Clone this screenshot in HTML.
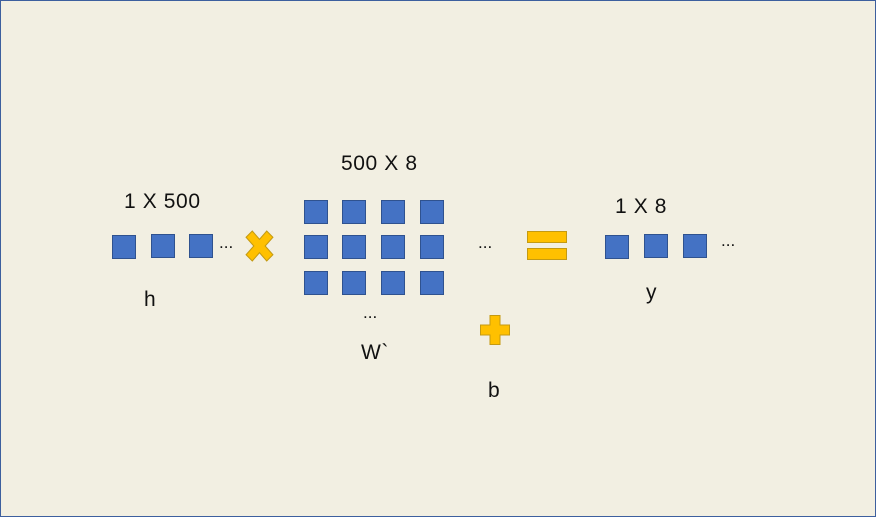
<!DOCTYPE html>
<html><head><style>
body{margin:0;width:876px;height:517px;overflow:hidden;font-family:"Liberation Sans",sans-serif}
#c{position:absolute;left:0;top:0;width:874px;height:515px;background:#f2efe2;border:1px solid #3d5f9e}
.s{position:absolute;width:22px;height:22px;background:#4472c4;border:1px solid #2f528f}
.t{position:absolute;font-size:21px;letter-spacing:0.6px;color:#111;line-height:1;white-space:nowrap}
.d{position:absolute;font-size:17px;color:#111;line-height:1}
</style></head><body><div id="c">
<div class="t" style="left:123px;top:190px">1 X 500</div>
<div class="t" style="left:340px;top:152px">500 X 8</div>
<div class="t" style="left:614px;top:195px">1 X 8</div>
<div class="t" style="left:143px;top:288px">h</div>
<div class="t" style="left:360px;top:341px">W`</div>
<div class="t" style="left:487px;top:379px">b</div>
<div class="t" style="left:645px;top:281px">y</div>

<div class="s" style="left:111px;top:234px"></div>
<div class="s" style="left:150px;top:233px"></div>
<div class="s" style="left:188px;top:233px"></div>
<div class="d" style="left:218px;top:233px">...</div>

<svg style="position:absolute;left:243px;top:229px" width="31" height="32" viewBox="0 0 30 31">
<path d="M2 7 L8 1 L15 9 L22 1 L28 7 L20.5 15.5 L28 24 L22 30 L15 22 L8 30 L2 24 L9.5 15.5 Z" fill="#ffc000" stroke="#c49a12" stroke-width="1"/></svg>

<div class="s" style="left:303px;top:199px"></div><div class="s" style="left:341px;top:199px"></div><div class="s" style="left:380px;top:199px"></div><div class="s" style="left:419px;top:199px"></div>
<div class="s" style="left:303px;top:234px"></div><div class="s" style="left:341px;top:234px"></div><div class="s" style="left:380px;top:234px"></div><div class="s" style="left:419px;top:234px"></div>
<div class="s" style="left:303px;top:270px"></div><div class="s" style="left:341px;top:270px"></div><div class="s" style="left:380px;top:270px"></div><div class="s" style="left:419px;top:270px"></div>
<div class="d" style="left:362px;top:303px">...</div>
<div class="d" style="left:477px;top:233px">...</div>

<div style="position:absolute;left:526px;top:230px;width:38px;height:10px;background:#ffc000;border:1px solid #c49a12"></div>
<div style="position:absolute;left:526px;top:247px;width:38px;height:10px;background:#ffc000;border:1px solid #c49a12"></div>

<svg style="position:absolute;left:479px;top:314px" width="31" height="31" viewBox="0 0 31 31">
<path d="M10 0.5 H20 V10 H29.5 V20 H20 V29.5 H10 V20 H0.5 V10 H10 Z" fill="#ffc000" stroke="#c49a12" stroke-width="1"/></svg>

<div class="s" style="left:604px;top:234px"></div>
<div class="s" style="left:643px;top:233px"></div>
<div class="s" style="left:682px;top:233px"></div>
<div class="d" style="left:720px;top:231px">...</div>
</div></body></html>
